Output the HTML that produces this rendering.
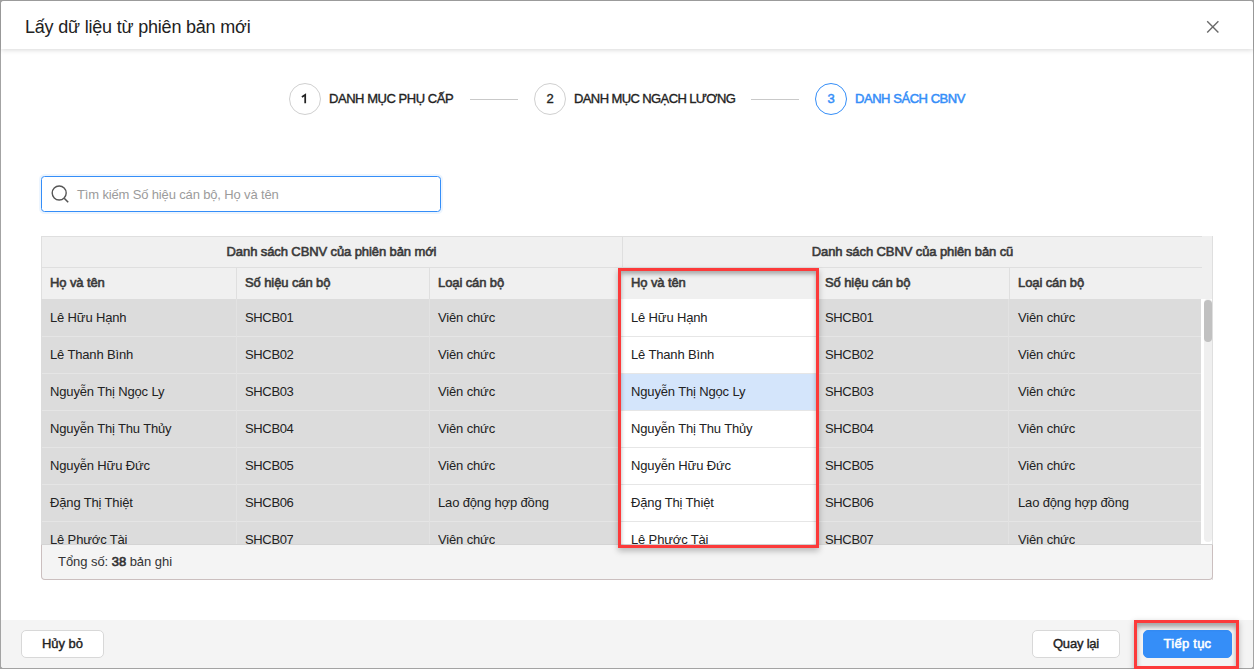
<!DOCTYPE html>
<html><head><meta charset="utf-8"><style>
*{box-sizing:border-box;margin:0;padding:0}
html,body{width:1254px;height:669px;overflow:hidden;background:#a3a3a3;font-family:"Liberation Sans",sans-serif;color:#222}
.a{position:absolute}
.t{position:absolute;white-space:nowrap;font-size:13px;line-height:16px;height:16px}
.b{-webkit-text-stroke:0.6px #3a3a3a;letter-spacing:-0.1px}
.r{letter-spacing:-0.15px}
.m{letter-spacing:-0.45px}
</style></head><body>
<div class="a" style="left:1px;top:1px;width:1252px;height:667px;background:#fff;border-radius:3px"></div>
<div class="a" style="left:1px;top:1px;width:1252px;height:48px;background:#fff;border-radius:3px 3px 0 0;box-shadow:0 1px 5px rgba(0,0,0,.16);z-index:1"></div>
<div class="t" style="left:25px;top:17px;font-size:18px;line-height:20px;height:20px;letter-spacing:-0.2px;color:#222;z-index:2">Lấy dữ liệu từ phiên bản mới</div>
<svg class="a" style="left:1200px;top:14px;z-index:2" width="26" height="26" viewBox="0 0 26 26"><path d="M7.2 7.2L18.4 18.4M18.4 7.2L7.2 18.4" stroke="#6a6a6a" stroke-width="1.4" fill="none"/></svg>
<div class="a" style="left:289px;top:83px;width:32px;height:32px;border:1px solid #d0d0d0;border-radius:50%;text-align:center;font-size:13px;line-height:30px;color:#222;-webkit-text-stroke:0.35px #222"><svg style="position:absolute;left:0;top:0" width="30" height="30" viewBox="0 0 30 30"><path d="M11.9 13L15.2 10.8V19.3" stroke="#222" stroke-width="1.75" fill="none" stroke-linejoin="miter"/></svg></div>
<div class="t m" style="left:329px;top:91px;color:#222;-webkit-text-stroke:0.35px #222">DANH MỤC PHỤ CẤP</div>
<div class="a" style="left:534px;top:83px;width:32px;height:32px;border:1px solid #d0d0d0;border-radius:50%;text-align:center;font-size:13px;line-height:30px;color:#222;-webkit-text-stroke:0.35px #222">2</div>
<div class="t m" style="left:574px;letter-spacing:-0.6px;top:91px;color:#222;-webkit-text-stroke:0.35px #222">DANH MỤC NGẠCH LƯƠNG</div>
<div class="a" style="left:815px;top:83px;width:32px;height:32px;border:1px solid #358ef8;border-radius:50%;text-align:center;font-size:13px;line-height:30px;color:#358ef8;-webkit-text-stroke:0.5px #358ef8">3</div>
<div class="t m" style="left:855px;top:91px;color:#358ef8;-webkit-text-stroke:0.5px #358ef8">DANH SÁCH CBNV</div>
<div class="a" style="left:470px;top:99px;width:48px;height:1px;background:#c9c9c9"></div>
<div class="a" style="left:751px;top:99px;width:48px;height:1px;background:#c9c9c9"></div>
<div class="a" style="left:41px;top:176px;width:400px;height:36px;border:1px solid #358ef8;border-radius:3.5px;box-shadow:0 0 0 2px rgba(53,142,248,.09)"></div>
<svg class="a" style="left:49px;top:183px" width="24" height="24" viewBox="0 0 24 24"><circle cx="10.2" cy="10" r="7" stroke="#555" stroke-width="1.4" fill="none"/><path d="M15.2 15.2L19.2 19.2" stroke="#555" stroke-width="1.6"/></svg>
<div class="t r" style="left:77px;top:187px;color:#9b9b9b">Tìm kiếm Số hiệu cán bộ, Họ và tên</div>
<div class="a" style="left:41px;top:236px;width:1172px;height:63px;background:#f0f0f0"></div>
<div class="a" style="left:41px;top:236px;width:1161px;height:1px;background:#dfdfdf"></div>
<div class="a" style="left:41px;top:236px;width:1px;height:63px;background:#dfdfdf"></div>
<div class="a" style="left:1212px;top:236px;width:1px;height:344px;background:#dfdfdf"></div>
<div class="a" style="left:42px;top:267px;width:1160px;height:1px;background:#dfdfdf"></div>
<div class="a" style="left:622px;top:236px;width:1px;height:32px;background:#dfdfdf"></div>
<div class="a" style="left:236px;top:267px;width:1px;height:32px;background:#dfdfdf"></div>
<div class="a" style="left:429px;top:267px;width:1px;height:32px;background:#dfdfdf"></div>
<div class="a" style="left:622px;top:267px;width:1px;height:32px;background:#dfdfdf"></div>
<div class="a" style="left:816px;top:267px;width:1px;height:32px;background:#dfdfdf"></div>
<div class="a" style="left:1009px;top:267px;width:1px;height:32px;background:#dfdfdf"></div>
<div class="t b" style="left:41px;width:581px;text-align:center;top:244px;color:#383838;letter-spacing:-0.1px">Danh sách CBNV của phiên bản mới</div>
<div class="t b" style="left:623px;width:579px;text-align:center;top:244px;color:#383838;letter-spacing:-0.1px">Danh sách CBNV của phiên bản cũ</div>
<div class="t b" style="left:50px;top:275px;color:#383838">Họ và tên</div>
<div class="t b" style="left:245px;top:275px;color:#383838">Số hiệu cán bộ</div>
<div class="t b" style="left:438px;top:275px;color:#383838">Loại cán bộ</div>
<div class="t b" style="left:631px;top:275px;color:#383838">Họ và tên</div>
<div class="t b" style="left:825px;top:275px;color:#383838">Số hiệu cán bộ</div>
<div class="t b" style="left:1018px;top:275px;color:#383838">Loại cán bộ</div>
<div class="a" style="left:41px;top:299px;width:1160px;height:245px;background:#dcdcdc;overflow:hidden"></div>
<div class="a" style="left:42px;top:336px;width:1159px;height:1px;background:#e5e5e5"></div>
<div class="t r" style="left:50px;top:310px;">Lê Hữu Hạnh</div>
<div class="t r" style="left:245px;top:310px;letter-spacing:-0.35px;">SHCB01</div>
<div class="t r" style="left:438px;top:310px;">Viên chức</div>
<div class="t r" style="left:825px;top:310px;letter-spacing:-0.35px;">SHCB01</div>
<div class="t r" style="left:1018px;top:310px;">Viên chức</div>
<div class="a" style="left:42px;top:373px;width:1159px;height:1px;background:#e5e5e5"></div>
<div class="t r" style="left:50px;top:347px;">Lê Thanh Bình</div>
<div class="t r" style="left:245px;top:347px;letter-spacing:-0.35px;">SHCB02</div>
<div class="t r" style="left:438px;top:347px;">Viên chức</div>
<div class="t r" style="left:825px;top:347px;letter-spacing:-0.35px;">SHCB02</div>
<div class="t r" style="left:1018px;top:347px;">Viên chức</div>
<div class="a" style="left:42px;top:410px;width:1159px;height:1px;background:#e5e5e5"></div>
<div class="t r" style="left:50px;top:384px;">Nguyễn Thị Ngọc Ly</div>
<div class="t r" style="left:245px;top:384px;letter-spacing:-0.35px;">SHCB03</div>
<div class="t r" style="left:438px;top:384px;">Viên chức</div>
<div class="t r" style="left:825px;top:384px;letter-spacing:-0.35px;">SHCB03</div>
<div class="t r" style="left:1018px;top:384px;">Viên chức</div>
<div class="a" style="left:42px;top:447px;width:1159px;height:1px;background:#e5e5e5"></div>
<div class="t r" style="left:50px;top:421px;">Nguyễn Thị Thu Thủy</div>
<div class="t r" style="left:245px;top:421px;letter-spacing:-0.35px;">SHCB04</div>
<div class="t r" style="left:438px;top:421px;">Viên chức</div>
<div class="t r" style="left:825px;top:421px;letter-spacing:-0.35px;">SHCB04</div>
<div class="t r" style="left:1018px;top:421px;">Viên chức</div>
<div class="a" style="left:42px;top:484px;width:1159px;height:1px;background:#e5e5e5"></div>
<div class="t r" style="left:50px;top:458px;">Nguyễn Hữu Đức</div>
<div class="t r" style="left:245px;top:458px;letter-spacing:-0.35px;">SHCB05</div>
<div class="t r" style="left:438px;top:458px;">Viên chức</div>
<div class="t r" style="left:825px;top:458px;letter-spacing:-0.35px;">SHCB05</div>
<div class="t r" style="left:1018px;top:458px;">Viên chức</div>
<div class="a" style="left:42px;top:521px;width:1159px;height:1px;background:#e5e5e5"></div>
<div class="t r" style="left:50px;top:495px;">Đặng Thị Thiệt</div>
<div class="t r" style="left:245px;top:495px;letter-spacing:-0.35px;">SHCB06</div>
<div class="t r" style="left:438px;top:495px;">Lao động hợp đồng</div>
<div class="t r" style="left:825px;top:495px;letter-spacing:-0.35px;">SHCB06</div>
<div class="t r" style="left:1018px;top:495px;">Lao động hợp đồng</div>
<div class="t r" style="left:50px;top:532px;clip-path:inset(0 0 4px 0);">Lê Phước Tài</div>
<div class="t r" style="left:245px;top:532px;letter-spacing:-0.35px;clip-path:inset(0 0 4px 0);">SHCB07</div>
<div class="t r" style="left:438px;top:532px;clip-path:inset(0 0 4px 0);">Viên chức</div>
<div class="t r" style="left:825px;top:532px;letter-spacing:-0.35px;clip-path:inset(0 0 4px 0);">SHCB07</div>
<div class="t r" style="left:1018px;top:532px;clip-path:inset(0 0 4px 0);">Viên chức</div>
<div class="a" style="left:236px;top:299px;width:1px;height:245px;background:#e2e2e2"></div>
<div class="a" style="left:429px;top:299px;width:1px;height:245px;background:#e2e2e2"></div>
<div class="a" style="left:622px;top:299px;width:1px;height:245px;background:#e2e2e2"></div>
<div class="a" style="left:815px;top:299px;width:1px;height:245px;background:#e2e2e2"></div>
<div class="a" style="left:1008px;top:299px;width:1px;height:245px;background:#e2e2e2"></div>
<div class="a" style="left:1201px;top:299px;width:11px;height:245px;background:#fff"></div>
<div class="a" style="left:1204px;top:299px;width:8px;height:243px;background:#efefef;border-radius:4px"></div>
<div class="a" style="left:1204px;top:300px;width:8px;height:42px;background:#c1c1c1;border-radius:4px"></div>
<div class="a" style="left:621px;top:271px;width:195px;height:273px;background:#fff"></div>
<div class="a" style="left:621px;top:271px;width:195px;height:28px;background:#f0f0f0"></div>
<div class="t b" style="left:631px;top:275px;color:#383838">Họ và tên</div>
<div class="a" style="left:621px;top:336px;width:195px;height:1px;background:#e6e6e6"></div>
<div class="t r" style="left:631px;top:310px;">Lê Hữu Hạnh</div>
<div class="a" style="left:621px;top:373px;width:195px;height:1px;background:#e6e6e6"></div>
<div class="t r" style="left:631px;top:347px;">Lê Thanh Bình</div>
<div class="a" style="left:621px;top:374px;width:195px;height:36px;background:#d4e5fb"></div>
<div class="a" style="left:621px;top:410px;width:195px;height:1px;background:#e6e6e6"></div>
<div class="t r" style="left:631px;top:384px;">Nguyễn Thị Ngọc Ly</div>
<div class="a" style="left:621px;top:447px;width:195px;height:1px;background:#e6e6e6"></div>
<div class="t r" style="left:631px;top:421px;">Nguyễn Thị Thu Thủy</div>
<div class="a" style="left:621px;top:484px;width:195px;height:1px;background:#e6e6e6"></div>
<div class="t r" style="left:631px;top:458px;">Nguyễn Hữu Đức</div>
<div class="a" style="left:621px;top:521px;width:195px;height:1px;background:#e6e6e6"></div>
<div class="t r" style="left:631px;top:495px;">Đặng Thị Thiệt</div>
<div class="t r" style="left:631px;top:532px;clip-path:inset(0 0 4px 0);">Lê Phước Tài</div>
<div class="a" style="left:618px;top:268px;width:201px;height:280px;z-index:5;border:3px solid #fc3a3a;box-shadow:inset 0 3px 4px rgba(0,0,0,.3),0 3px 6px rgba(0,0,0,.25)"></div>
<div class="a" style="left:41px;top:544px;width:1172px;height:36px;background:#f4f4f4;border:1px solid #cbbfbf;border-top:none;border-radius:0 0 4px 4px"></div>
<div class="a" style="left:41px;top:544px;width:1172px;height:1px;background:#d4d4d4;z-index:1"></div>
<div class="t" style="left:58px;top:554px;color:#333;letter-spacing:-0.05px">Tổng số: <span style="-webkit-text-stroke:0.65px #333">38</span> bản ghi</div>
<div class="a" style="left:1px;top:620px;width:1252px;height:48px;background:#f4f4f4;border-radius:0 0 3px 3px"></div>
<div class="a" style="left:21px;top:630px;width:83px;height:28px;background:#fff;border:1px solid #d8d8d8;color:#222;-webkit-text-stroke:0.4px #222;border-radius:5px;text-align:center;font-size:13px;line-height:26px;letter-spacing:0px">Hủy bỏ</div>
<div class="a" style="left:1032px;top:630px;width:88px;height:28px;background:#fff;border:1px solid #d8d8d8;color:#222;-webkit-text-stroke:0.4px #222;border-radius:5px;text-align:center;font-size:13px;line-height:26px;letter-spacing:-0.2px">Quay lại</div>
<div class="a" style="left:1143px;top:630px;width:89px;height:28px;background:#358ef8;border:1px solid #358ef8;color:#fff;-webkit-text-stroke:0.55px #fff;border-radius:5px;text-align:center;font-size:13px;line-height:26px;letter-spacing:0.25px">Tiếp tục</div>
<div class="a" style="left:1134px;top:620px;width:105px;height:49px;z-index:5;border:3px solid #fc3a3a;box-shadow:inset 0 4px 5px rgba(0,0,0,.33),0 2px 6px rgba(0,0,0,.25)"></div>
</body></html>
